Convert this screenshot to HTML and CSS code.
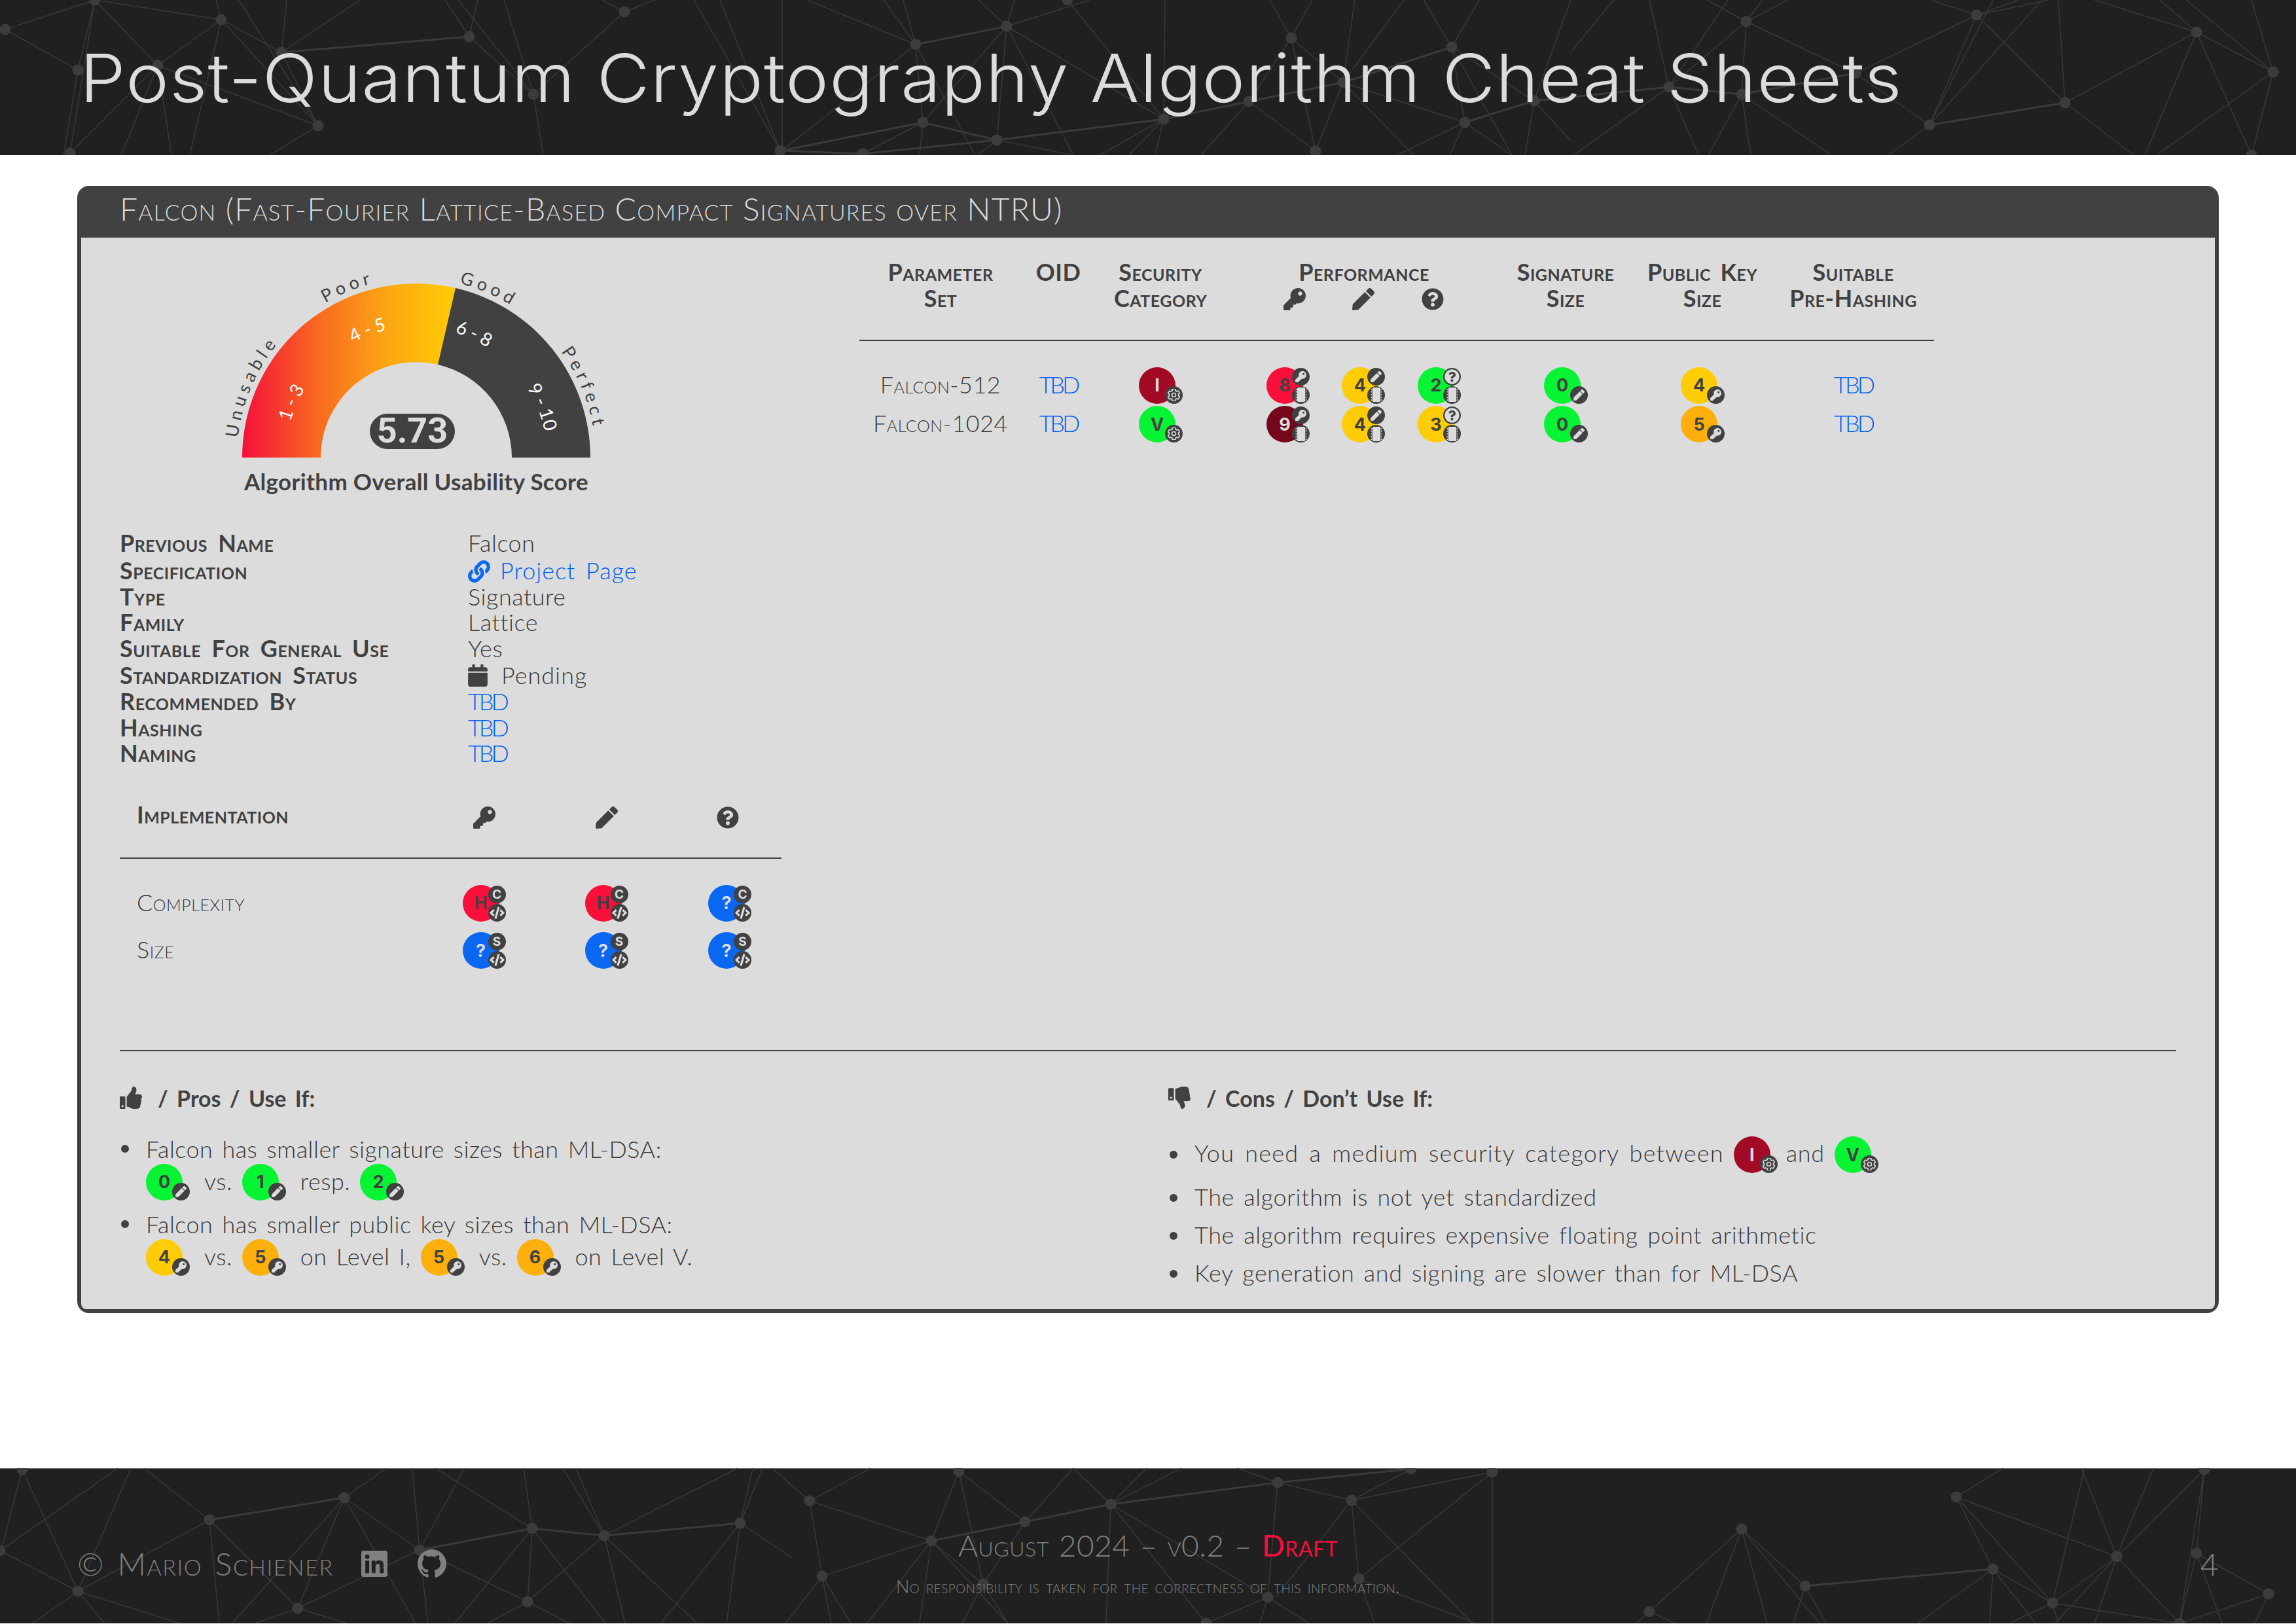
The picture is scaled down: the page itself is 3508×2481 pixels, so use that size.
FILE: index.html
```html
<!DOCTYPE html>
<html lang="en">
<head>
    <meta charset="UTF-8">
    <title>Post-Quantum Cryptography Algorithm Cheat Sheets</title>
    <link rel="stylesheet" href="styles.css">
</head>
<body>
    <svg class="defs" xmlns="http://www.w3.org/2000/svg">
        <symbol id="i-key" viewBox="0 0 512 512"><path d="M512 176.001C512 273.203 433.202 352 336 352c-11.22 0-22.19-1.062-32.827-3.069l-24.012 27.014A23.999 23.999 0 0 1 261.223 384H224v40c0 13.255-10.745 24-24 24h-40v40c0 13.255-10.745 24-24 24H24c-13.255 0-24-10.745-24-24v-78.059c0-6.365 2.529-12.47 7.029-16.971l161.802-161.802C163.108 213.814 160 195.271 160 176 160 78.798 238.797.001 335.999 0 433.488-.001 512 78.511 512 176.001zM336 128c0 26.51 21.49 48 48 48s48-21.49 48-48-21.49-48-48-48-48 21.49-48 48z"/></symbol>
        <symbol id="i-pen" viewBox="0 0 512 512"><path d="M290.74 93.24l128.02 128.02-277.99 277.99-114.14 12.6C11.35 513.54-1.56 500.62.14 485.34l12.7-114.22 277.9-277.88zm207.2-19.06l-60.11-60.11c-18.75-18.75-49.16-18.75-67.91 0l-56.55 56.55 128.02 128.02 56.55-56.55c18.75-18.76 18.75-49.16 0-67.91z"/></symbol>
        <symbol id="i-question" viewBox="0 0 512 512"><path d="M504 256c0 136.997-111.043 248-248 248S8 392.997 8 256C8 119.083 119.043 8 256 8s248 111.083 248 248zM262.655 90c-54.497 0-89.255 22.957-116.549 63.758-3.536 5.286-2.353 12.415 2.715 16.258l34.699 26.31c5.205 3.947 12.621 3.008 16.665-2.122 17.864-22.658 30.113-35.797 57.303-35.797 20.429 0 45.698 13.148 45.698 32.958 0 14.976-12.363 22.667-32.534 33.976C247.128 238.528 216 254.941 216 296v4c0 6.627 5.373 12 12 12h56c6.627 0 12-5.373 12-12v-1.333c0-28.462 83.186-29.647 83.186-106.667 0-58.002-60.165-102-116.531-102zM256 338c-25.365 0-46 20.635-46 46 0 25.364 20.635 46 46 46s46-20.636 46-46c0-25.365-20.635-46-46-46z"/></symbol>
        <symbol id="i-link" viewBox="0 0 512 512"><path d="M326.612 185.391c59.747 59.809 58.927 155.698.36 214.59-.11.12-.24.25-.36.37l-67.2 67.2c-59.27 59.27-155.699 59.262-214.96 0-59.27-59.26-59.27-155.7 0-214.96l37.106-37.106c9.84-9.84 26.786-3.3 27.294 10.606.648 17.722 3.826 35.527 9.69 52.721 1.986 5.822.567 12.262-3.783 16.612l-13.087 13.087c-28.026 28.026-28.905 73.66-1.155 101.96 28.024 28.579 74.086 28.749 102.325.51l67.2-67.19c28.191-28.191 28.073-73.757 0-101.83-3.701-3.694-7.429-6.564-10.341-8.569a16.037 16.037 0 0 1-6.947-12.606c-.396-10.567 3.348-21.456 11.698-29.806l21.054-21.055c5.521-5.521 14.182-6.199 20.584-1.731a152.482 152.482 0 0 1 20.522 17.197zM467.547 44.449c-59.261-59.262-155.69-59.27-214.96 0l-67.2 67.2c-.12.12-.25.25-.36.37-58.566 58.892-59.387 154.781.36 214.59a152.454 152.454 0 0 0 20.521 17.196c6.402 4.468 15.064 3.789 20.584-1.731l21.054-21.055c8.35-8.35 12.094-19.239 11.698-29.806a16.037 16.037 0 0 0-6.947-12.606c-2.912-2.005-6.64-4.875-10.341-8.569-28.073-28.073-28.191-73.639 0-101.83l67.2-67.19c28.239-28.239 74.3-28.069 102.325.51 27.75 28.3 26.872 73.934-1.155 101.96l-13.087 13.087c-4.35 4.35-5.769 10.79-3.783 16.612 5.864 17.194 9.042 34.999 9.69 52.721.509 13.906 17.454 20.446 27.294 10.606l37.106-37.106c59.271-59.259 59.271-155.699.001-214.959z"/></symbol>
        <symbol id="i-calendar" viewBox="0 0 448 512"><path d="M12 192h424c6.6 0 12 5.4 12 12v260c0 26.5-21.5 48-48 48H48c-26.5 0-48-21.5-48-48V204c0-6.6 5.4-12 12-12zm436-44v-36c0-26.5-21.5-48-48-48h-48V12c0-6.6-5.4-12-12-12h-40c-6.6 0-12 5.4-12 12v52H160V12c0-6.6-5.4-12-12-12h-40c-6.6 0-12 5.4-12 12v52H48C21.5 64 0 85.5 0 112v36c0 6.6 5.4 12 12 12h424c6.6 0 12-5.4 12-12z"/></symbol>
        <symbol id="i-up" viewBox="0 0 512 512"><path d="M104 224H24c-13.255 0-24 10.745-24 24v240c0 13.255 10.745 24 24 24h80c13.255 0 24-10.745 24-24V248c0-13.255-10.745-24-24-24zM64 472c-13.255 0-24-10.745-24-24s10.745-24 24-24 24 10.745 24 24-10.745 24-24 24zM384 81.452c0 42.416-25.97 66.208-33.277 94.548h101.723c33.397 0 59.397 27.746 59.553 58.098.084 17.938-7.546 37.249-19.439 49.197l-.11.11c9.836 23.337 8.237 56.037-9.308 79.469 8.681 25.895-.069 57.704-16.382 74.757 4.298 17.598 2.244 32.575-6.148 44.632C440.202 511.587 389.616 512 346.839 512l-2.845-.001c-48.287-.017-87.806-17.598-119.56-31.725-15.957-7.099-36.821-15.887-52.651-16.178-6.54-.12-11.783-5.457-11.783-11.998v-213.77c0-3.2 1.282-6.271 3.558-8.521 39.614-39.144 56.648-80.587 89.117-113.111 14.804-14.832 20.188-37.236 25.393-58.902C282.515 39.293 291.817 0 312 0c24 0 72 8 72 81.452z"/></symbol>
        <symbol id="i-down" viewBox="0 0 512 512"><path d="M0 56v240c0 13.255 10.745 24 24 24h80c13.255 0 24-10.745 24-24V56c0-13.255-10.745-24-24-24H24C10.745 32 0 42.745 0 56zm40 200c0-13.255 10.745-24 24-24s24 10.745 24 24-10.745 24-24 24-24-10.745-24-24zm272 256c-20.183 0-29.485-39.293-33.931-57.795-5.206-21.666-10.589-44.07-25.393-58.902-32.469-32.524-49.503-73.967-89.117-113.111a11.98 11.98 0 0 1-3.558-8.521V59.901c0-6.541 5.243-11.878 11.783-11.998 15.831-.29 36.694-9.079 52.651-16.178C256.189 17.598 295.709.017 343.995 0h2.844c42.777 0 93.363.413 113.774 29.737 8.392 12.057 10.446 27.034 6.148 44.632 16.312 17.053 25.063 48.863 16.382 74.757 17.544 23.432 19.143 56.132 9.308 79.469l.11.11c11.893 11.949 19.523 31.259 19.439 49.197-.156 30.352-26.157 58.098-59.553 58.098H350.723C358.03 364.34 384 388.132 384 430.548 384 504 336 512 312 512z"/></symbol>
        <symbol id="i-linkedin" viewBox="0 32 448 448"><path d="M416 32H31.9C14.3 32 0 46.5 0 64.3v383.4C0 465.5 14.3 480 31.9 480H416c17.6 0 32-14.5 32-32.3V64.3c0-17.8-14.4-32.3-32-32.3zM135.4 416H69V202.2h66.5V416zm-33.2-243c-21.3 0-38.5-17.3-38.5-38.5S80.9 96 102.2 96c21.2 0 38.5 17.3 38.5 38.5 0 21.3-17.2 38.5-38.5 38.5zm282.1 243h-66.4V312c0-24.8-.5-56.7-34.5-56.7-34.6 0-39.9 27-39.9 54.9V416h-66.4V202.2h63.7v29.2h.9c8.9-16.8 30.6-34.5 62.9-34.5 67.2 0 79.7 44.3 79.7 101.9V416z"/></symbol>
        <symbol id="i-github" viewBox="0 0 16 16"><path d="M8 0C3.58 0 0 3.58 0 8c0 3.54 2.29 6.53 5.47 7.59.4.07.55-.17.55-.38 0-.19-.01-.82-.01-1.49-2.01.37-2.53-.49-3.03-.94-.18-.46-.48-.94-.82-1.13-.28-.15-.68-.52-.01-.53.63-.01 1.08.58 1.23.82.72 1.21 1.87.87 2.33.66.07-.52.28-.87.51-1.07-1.78-.2-3.64-.89-3.64-3.95 0-.87.31-1.59.82-2.15-.08-.2-.36-1.02.08-2.12 0 0 .67-.21 2.2.82.64-.18 1.32-.27 2-.27.68 0 1.36.09 2 .27 1.53-1.04 2.2-.82 2.2-.82.44 1.1.16 1.92.08 2.12.51.56.82 1.27.82 2.15 0 3.07-1.87 3.75-3.65 3.95.29.25.54.73.54 1.48 0 1.07-.01 1.93-.01 2.2 0 .21.15.46.55.38A8.013 8.013 0 0016 8c0-4.42-3.58-8-8-8z"/></symbol>
        <symbol id="i-code" viewBox="0 0 640 512"><path d="M278.9 511.5l-61-17.7c-6.4-1.8-10-8.5-8.2-14.9L346.2 8.7c1.8-6.4 8.5-10 14.9-8.2l61 17.7c6.4 1.8 10 8.5 8.2 14.9L293.8 503.3c-1.9 6.4-8.5 10.1-14.9 8.2zm-114-112.2l43.5-46.4c4.6-4.9 4.3-12.7-.8-17.2L117 256l90.6-79.7c5.1-4.5 5.5-12.3.8-17.2l-43.5-46.4c-4.5-4.8-12.1-5.1-17-.5L3.8 247.2c-5.1 4.7-5.1 12.8 0 17.5l144.1 135.1c4.9 4.6 12.5 4.4 17-.5zm327.2.6l144.1-135.1c5.1-4.7 5.1-12.8 0-17.5L492.1 112.1c-4.8-4.5-12.4-4.3-17 .5L431.6 159c-4.6 4.9-4.3 12.7.8 17.2L523 256l-90.6 79.7c-5.1 4.5-5.5 12.3-.8 17.2l43.5 46.4c4.5 4.9 12.1 5.1 17 .6z"/></symbol>
        <symbol id="i-cog" viewBox="0 0 512 512"><path fill="none" stroke="currentColor" stroke-width="44" d="M487.4 315.7l-42.6-24.6c4.3-23.2 4.3-47 0-70.2l42.6-24.6c4.9-2.8 7.1-8.6 5.5-14-11.1-35.6-30-67.8-54.7-94.6-3.8-4.1-10-5.1-14.8-2.3L380.8 110c-17.9-15.4-38.5-27.3-60.8-35.1V25.8c0-5.6-3.9-10.5-9.4-11.7-36.7-8.2-74.3-7.8-109.2 0-5.5 1.2-9.4 6.1-9.4 11.7V75c-22.2 7.9-42.8 19.8-60.8 35.1L88.7 85.5c-4.9-2.8-11-1.9-14.8 2.3-24.7 26.7-43.6 58.9-54.7 94.6-1.7 5.4.6 11.2 5.5 14L67.3 221c-4.3 23.2-4.3 47 0 70.2l-42.6 24.6c-4.9 2.8-7.1 8.6-5.5 14 11.1 35.6 30 67.8 54.7 94.6 3.8 4.1 10 5.1 14.8 2.3l42.6-24.6c17.9 15.4 38.5 27.3 60.8 35.1v49.2c0 5.6 3.9 10.5 9.4 11.7 36.7 8.2 74.3 7.8 109.2 0 5.5-1.2 9.4-6.1 9.4-11.7v-49.2c22.2-7.9 42.8-19.8 60.8-35.1l42.6 24.6c4.9 2.8 11 1.9 14.8-2.3 24.7-26.7 43.6-58.9 54.7-94.6 1.5-5.5-.7-11.3-5.6-14.1zM256 336c-44.1 0-80-35.9-80-80s35.9-80 80-80 80 35.9 80 80-35.9 80-80 80z"/></symbol>
        <symbol id="i-chip" viewBox="0 0 512 512"><rect x="112" y="0" width="288" height="512" rx="48"/><path d="M60 48h36v40H60zM60 136h36v40H60zM60 236h36v40H60zM60 336h36v40H60zM60 424h36v40H60zM416 48h36v40h-36zM416 136h36v40h-36zM416 236h36v40h-36zM416 336h36v40h-36zM416 424h36v40h-36z"/></symbol>
    </svg>

    <header class="banner">
        <svg class="net" viewBox="0 0 3508 237" aria-hidden="true">
            <path class="net-thin" d="M8 45L145 0M8 45L119 107M145 0L119 107M145 0L241 100M145 0L107 234M145 0L338 30M338 30L241 100M338 30L486 192M338 30L290 237M338 30L330 0M241 100L107 234M241 100L486 192M241 100L185 237M241 100L262 237M430 80L550 0M430 80L438 0M430 80L486 192M430 80L338 30M119 107L97 237M486 192L412 237M486 192L365 0M717 56L815 144M717 56L730 0M717 56L680 0M954 18L815 144M954 18L920 0M954 18L1000 0M815 144L770 0M815 144L700 0M815 144L830 237M1192 230L1100 0M1192 230L1060 0M1195 230L1195 0M1233 0L1399 68M1399 68L1350 0M1399 68L1380 0M1399 68L1410 187M1399 68L1490 237M1399 68L1195 230M1538 40L1410 187M1538 40L1523 214M1538 40L1778 182M1538 40L1495 0M1538 40L1550 0M1538 40L1665 0M1538 40L1640 237M1631 0L1778 182M1778 182L1680 237M1778 182L1725 237M1778 182L1765 237M1410 187L1318 235M1410 187L1405 237M1523 214L1495 237M1523 214L1640 237M1780 0L1778 182M1908 155L2010 231M1908 155L1835 237M1908 155L1973 58M1973 58L2052 126M1973 58L1940 0M1973 58L2005 0M1973 58L2010 231M2052 126L2238 187M2052 126L2160 237M2052 126L2010 231M2052 126L2070 0M2052 126L2145 0M2218 72L2344 154M2218 72L2238 187M2218 72L2175 0M2218 72L2260 0M2218 72L2310 237M2238 187L2134 237M2238 187L2215 237M2238 187L2310 237M2344 154L2330 237M2344 154L2400 0M2344 154L2400 215M2400 80L2465 0M2668 33L2608 0M2668 33L2732 0M2668 33L2693 0M2668 33L2835 112M2668 33L2661 144M2668 33L2550 133M2835 112L3020 23M2835 112L2948 191M2550 133L2520 0M2550 133L2595 237M2550 133L2640 0M2550 133L2400 240M2661 144L2798 237M2661 144L2610 237M2661 144L2675 237M3020 23L2948 191M3020 23L3155 157M3020 23L2950 0M3020 23L3130 0M3020 23L3085 0M2948 191L2885 237M2948 191L3120 0M2948 191L3045 0M3155 157L3356 49M3155 157L3145 0M3155 157L3260 237M3356 49L3473 110M3356 49L3200 0M3356 49L3300 0M3356 49L3440 237M3356 49L3277 237M3473 110L3440 237M3473 110L3295 237M3473 110L3440 0M3473 110L3340 0"/>
            <path class="net-thick" d="M1399 68L1538 40M1778 182L1908 155M1778 182L1523 214M1410 187L1523 214M1195 230L1410 187M1195 230L1318 235M1318 235L1523 214M1908 155L2052 126M2052 126L2218 72M2238 187L2344 154M2344 154L2550 133M2550 133L2661 144M2661 144L2835 112M2948 191L3155 157M430 80L717 56"/>
            <path class="net-dot" d="M8 45h0M145 0h0M338 30h0M119 107h0M241 100h0M430 80h0M486 192h0M107 234h0M717 56h0M954 18h0M815 144h0M1192 230h0M1399 68h0M1538 40h0M1631 0h0M1973 58h0M2218 72h0M2052 126h0M1908 155h0M1778 182h0M2344 154h0M1410 187h0M1523 214h0M2238 187h0M1318 235h0M2010 231h0M2668 33h0M3020 23h0M3356 49h0M3473 110h0M2550 133h0M2661 144h0M2835 112h0M2948 191h0M3155 157h0M3440 237h0"/>
        </svg>
        <h1>Post-Quantum Cryptography Algorithm Cheat Sheets</h1>
    </header>

    <main class="content">
        <section class="card">
            <h2 class="card-title">Falcon (Fast-Fourier Lattice-Based Compact Signatures over NTRU)</h2>
            <div class="card-body">
                <div class="top">
                    <div class="left">
                        <svg class="gauge" viewBox="0 0 700 380">
                            <defs>
                                <linearGradient id="score-fill" gradientUnits="userSpaceOnUse" x1="84" y1="0" x2="410" y2="0">
                                    <stop offset="0" stop-color="#f50f3a"/>
                                    <stop offset=".36" stop-color="#f96a20"/>
                                    <stop offset=".67" stop-color="#fca514"/>
                                    <stop offset="1" stop-color="#ffcc05"/>
                                </linearGradient>
                                <path id="arc-outer" d="M76 319A274 274 0 0 1 624 319"/>
                                <path id="arc-inner" d="M150 319A200 200 0 0 1 550 319"/>
                            </defs>
                            <path d="M84 319A266 266 0 0 1 410 60L383 177A146 146 0 0 0 204 319Z" fill="url(#score-fill)"/>
                            <path d="M410 60A266 266 0 0 1 616 319L496 319A146 146 0 0 0 383 177Z" fill="#414141"/>
                            <g class="gauge-out">
                                <text text-anchor="middle"><textPath href="#arc-outer" startOffset="12.9%">Unusable</textPath></text>
                                <text text-anchor="middle"><textPath href="#arc-outer" startOffset="37.8%">Poor</textPath></text>
                                <text text-anchor="middle"><textPath href="#arc-outer" startOffset="63%">Good</textPath></text>
                                <text text-anchor="middle"><textPath href="#arc-outer" startOffset="87.5%">Perfect</textPath></text>
                            </g>
                            <g class="gauge-in">
                                <text text-anchor="middle"><textPath href="#arc-inner" startOffset="13.3%">1 - 3</textPath></text>
                                <text text-anchor="middle"><textPath href="#arc-inner" startOffset="38.4%">4 - 5</textPath></text>
                                <text text-anchor="middle"><textPath href="#arc-inner" startOffset="64%">6 - 8</textPath></text>
                                <text text-anchor="middle"><textPath href="#arc-inner" startOffset="88%">9 - 10</textPath></text>
                            </g>
                            <rect x="279" y="252" width="130" height="54" rx="27" fill="#414141"/>
                            <text class="gauge-score" x="344" y="296" text-anchor="middle">5.73</text>
                            <text class="gauge-label" x="350" y="369" text-anchor="middle">Algorithm Overall Usability Score</text>
                        </svg>

                        <dl class="info">
                            <dt>Previous Name</dt><dd>Falcon</dd>
                            <dt class="tall">Specification</dt><dd class="tall"><a class="page-link" href="#"><svg class="icon-link"><use href="#i-link"/></svg>Project Page</a></dd>
                            <dt>Type</dt><dd>Signature</dd>
                            <dt>Family</dt><dd>Lattice</dd>
                            <dt>Suitable For General Use</dt><dd>Yes</dd>
                            <dt class="tall">Standardization Status</dt><dd class="tall status"><svg class="icon-cal"><use href="#i-calendar"/></svg>Pending</dd>
                            <dt>Recommended By</dt><dd><a class="tbd" href="#">TBD</a></dd>
                            <dt>Hashing</dt><dd><a class="tbd" href="#">TBD</a></dd>
                            <dt>Naming</dt><dd><a class="tbd" href="#">TBD</a></dd>
                        </dl>

                        <table class="impl">
                            <thead>
                                <tr>
                                    <th>Implementation</th>
                                    <th><svg class="icon-head"><use href="#i-key"/></svg></th>
                                    <th><svg class="icon-head"><use href="#i-pen"/></svg></th>
                                    <th><svg class="icon-head"><use href="#i-question"/></svg></th>
                                </tr>
                            </thead>
                            <tbody>
                                <tr>
                                    <td>Complexity</td>
                                    <td><span class="badge red">H<span class="sub top"><b>C</b></span><span class="sub bottom"><svg class="code"><use href="#i-code"/></svg></span></span></td>
                                    <td><span class="badge red">H<span class="sub top"><b>C</b></span><span class="sub bottom"><svg class="code"><use href="#i-code"/></svg></span></span></td>
                                    <td><span class="badge blue">?<span class="sub top"><b>C</b></span><span class="sub bottom"><svg class="code"><use href="#i-code"/></svg></span></span></td>
                                </tr>
                                <tr>
                                    <td>Size</td>
                                    <td><span class="badge blue">?<span class="sub top"><b>S</b></span><span class="sub bottom"><svg class="code"><use href="#i-code"/></svg></span></span></td>
                                    <td><span class="badge blue">?<span class="sub top"><b>S</b></span><span class="sub bottom"><svg class="code"><use href="#i-code"/></svg></span></span></td>
                                    <td><span class="badge blue">?<span class="sub top"><b>S</b></span><span class="sub bottom"><svg class="code"><use href="#i-code"/></svg></span></span></td>
                                </tr>
                            </tbody>
                        </table>
                    </div>

                    <table class="params">
                        <colgroup>
                            <col class="w-param"><col class="w-oid"><col class="w-sec"><col class="w-key"><col class="w-pen"><col class="w-q"><col class="w-sig"><col class="w-pub"><col class="w-pre">
                        </colgroup>
                        <thead>
                            <tr>
                                <th rowspan="2">Parameter<br>Set</th>
                                <th rowspan="2">OID</th>
                                <th rowspan="2" class="col-sec">Security<br>Category</th>
                                <th colspan="3">Performance</th>
                                <th rowspan="2" class="col-sig">Signature<br>Size</th>
                                <th rowspan="2">Public Key<br>Size</th>
                                <th rowspan="2">Suitable<br>Pre-Hashing</th>
                            </tr>
                            <tr>
                                <th class="perf-key"><svg class="icon-head"><use href="#i-key"/></svg></th>
                                <th><svg class="icon-head"><use href="#i-pen"/></svg></th>
                                <th class="perf-q"><svg class="icon-head"><use href="#i-question"/></svg></th>
                            </tr>
                        </thead>
                        <tbody>
                            <tr>
                                <td class="txt">Falcon-512</td>
                                <td class="txt"><a class="tbd" href="#">TBD</a></td>
                                <td class="col-sec"><span class="badge maroon">I<span class="sub one"><svg class="cog"><use href="#i-cog"/></svg></span></span></td>
                                <td><span class="badge red">8<span class="sub top"><svg><use href="#i-key"/></svg></span><span class="sub bottom"><svg class="chip"><use href="#i-chip"/></svg></span></span></td>
                                <td><span class="badge yellow">4<span class="sub top"><svg><use href="#i-pen"/></svg></span><span class="sub bottom"><svg class="chip"><use href="#i-chip"/></svg></span></span></td>
                                <td><span class="badge green">2<span class="sub top"><svg class="qm"><use href="#i-question"/></svg></span><span class="sub bottom"><svg class="chip"><use href="#i-chip"/></svg></span></span></td>
                                <td class="col-sig"><span class="badge green">0<span class="sub one"><svg><use href="#i-pen"/></svg></span></span></td>
                                <td><span class="badge yellow">4<span class="sub one"><svg><use href="#i-key"/></svg></span></span></td>
                                <td class="txt"><a class="tbd" href="#">TBD</a></td>
                            </tr>
                            <tr>
                                <td class="txt">Falcon-1024</td>
                                <td class="txt"><a class="tbd" href="#">TBD</a></td>
                                <td class="col-sec"><span class="badge green">V<span class="sub one"><svg class="cog"><use href="#i-cog"/></svg></span></span></td>
                                <td><span class="badge wine">9<span class="sub top"><svg><use href="#i-key"/></svg></span><span class="sub bottom"><svg class="chip"><use href="#i-chip"/></svg></span></span></td>
                                <td><span class="badge yellow">4<span class="sub top"><svg><use href="#i-pen"/></svg></span><span class="sub bottom"><svg class="chip"><use href="#i-chip"/></svg></span></span></td>
                                <td><span class="badge yellow">3<span class="sub top"><svg class="qm"><use href="#i-question"/></svg></span><span class="sub bottom"><svg class="chip"><use href="#i-chip"/></svg></span></span></td>
                                <td class="col-sig"><span class="badge green">0<span class="sub one"><svg><use href="#i-pen"/></svg></span></span></td>
                                <td><span class="badge orange">5<span class="sub one"><svg><use href="#i-key"/></svg></span></span></td>
                                <td class="txt"><a class="tbd" href="#">TBD</a></td>
                            </tr>
                        </tbody>
                    </table>
                </div>

                <hr class="rule">

                <div class="proscons">
                    <div>
                        <h3><svg class="icon-thumb"><use href="#i-up"/></svg>/ Pros / Use If:</h3>
                        <ul class="pros">
                            <li>Falcon has smaller signature sizes than ML-DSA:
                                <div class="row">
                                    <span class="badge green">0<span class="sub one"><svg><use href="#i-pen"/></svg></span></span><span class="word">vs.</span>
                                    <span class="badge green">1<span class="sub one"><svg><use href="#i-pen"/></svg></span></span><span class="word">resp.</span>
                                    <span class="badge green">2<span class="sub one"><svg><use href="#i-pen"/></svg></span></span>
                                </div>
                            </li>
                            <li>Falcon has smaller public key sizes than ML-DSA:
                                <div class="row">
                                    <span class="badge yellow">4<span class="sub one"><svg><use href="#i-key"/></svg></span></span><span class="word">vs.</span>
                                    <span class="badge orange">5<span class="sub one"><svg><use href="#i-key"/></svg></span></span><span class="word">on Level I,</span>
                                    <span class="badge orange">5<span class="sub one"><svg><use href="#i-key"/></svg></span></span><span class="word">vs.</span>
                                    <span class="badge orange">6<span class="sub one"><svg><use href="#i-key"/></svg></span></span><span class="word">on Level V.</span>
                                </div>
                            </li>
                        </ul>
                    </div>
                    <div>
                        <h3><svg class="icon-thumb"><use href="#i-down"/></svg>/ Cons / Don’t Use If:</h3>
                        <ul class="cons">
                            <li class="row"><span class="word wide">You need a medium security category between</span>
                                <span class="badge maroon">I<span class="sub one"><svg class="cog"><use href="#i-cog"/></svg></span></span><span class="word">and</span>
                                <span class="badge green">V<span class="sub one"><svg class="cog"><use href="#i-cog"/></svg></span></span>
                            </li>
                            <li>The algorithm is not yet standardized</li>
                            <li>The algorithm requires expensive floating point arithmetic</li>
                            <li>Key generation and signing are slower than for ML-DSA</li>
                        </ul>
                    </div>
                </div>
            </div>
        </section>
    </main>

    <footer class="foot">
        <svg class="net" viewBox="0 2243 3508 237" aria-hidden="true">
            <path class="net-thin" d="M34 2245L0 2375M34 2245L119 2431M320 2322L220 2243M320 2322L119 2431M320 2322L335 2480M320 2322L455 2457M526 2288L590 2243M526 2288L641 2368M526 2288L355 2480M526 2288L455 2457M526 2288L635 2480M641 2368L455 2457M641 2368L630 2243M641 2368L710 2243M641 2368L654 2480M641 2368L806 2447M813 2335L665 2243M813 2335L800 2243M813 2335L806 2447M813 2335L695 2480M813 2335L925 2480M923 2346L860 2243M923 2346L880 2243M923 2346L1127 2243M923 2346L806 2447M923 2346L955 2480M923 2346L1065 2480M1131 2327L1150 2243M1131 2327L1010 2480M1131 2327L1110 2480M1131 2327L1165 2243M1131 2327L1210 2380M0 2369L119 2431M0 2369L180 2243M119 2431L200 2243M119 2431L50 2480M119 2431L160 2480M119 2431L275 2480M455 2457L390 2480M455 2457L530 2480M806 2447L745 2480M806 2447L870 2480M1465 2248L1423 2354M1465 2248L1566 2325M1465 2248L1502 2420M1237 2293L1423 2354M1237 2293L1330 2243M1237 2293L1256 2408M1237 2293L1180 2243M1423 2354L1256 2408M1566 2325L1640 2243M1566 2325L1502 2420M1423 2354L1502 2420M1423 2354L1325 2480M1423 2354L1405 2480M1423 2354L1540 2480M1256 2408L1200 2480M1256 2408L1270 2480M1256 2408L1300 2480M1502 2420L1470 2480M1502 2420L1540 2480M1697 2298L1640 2243M1697 2298L1752 2243M1697 2298L1805 2243M1697 2298L1690 2480M1697 2298L1937 2440M1697 2298L1843 2480M1952 2265L1937 2440M1952 2265L1890 2243M1952 2265L2065 2292M2065 2292L2280 2249M2065 2292L2156 2244M2065 2292L2076 2412M2065 2292L1950 2440M2076 2412L2280 2249M2076 2412L2100 2480M2280 2249L2280 2480M2076 2412L2255 2480M1937 2440L1843 2480M1937 2440L1925 2480M1937 2440L2000 2480M2065 2292L2250 2480M2989 2287L3234 2378M2989 2287L3045 2397M2989 2287L3136 2449M2989 2287L3060 2243M2661 2336L2520 2462M2661 2336L2758 2423M2661 2336L2607 2480M2661 2336L2700 2480M2661 2336L2780 2480M2758 2423L2740 2480M2758 2423L2790 2480M2520 2462L2560 2480M2520 2462L2500 2480M3045 2397L2930 2480M3045 2397L3040 2480M3045 2397L3136 2449M3045 2397L3110 2480M3136 2449L3234 2378M3136 2449L3330 2480M3136 2449L3070 2480M3136 2449L3145 2480M3234 2378L3180 2243M3234 2378L3140 2480M3234 2378L3290 2243M3234 2378L3368 2245M3234 2378L3330 2480M3234 2378L3200 2480M3136 2449L3185 2243M3356 2373L3368 2245M3356 2373L3330 2480M3356 2373L3466 2435M3356 2373L3395 2480M3368 2245L3330 2480M3466 2435L3330 2480M3466 2435L3445 2480"/>
            <path class="net-thick" d="M320 2322L526 2288M641 2368L813 2335M813 2335L923 2346M923 2346L1131 2327M1423 2354L1566 2325M1566 2325L1697 2298M1697 2298L1952 2265M1952 2265L2156 2244M2758 2423L3045 2397"/>
            <path class="net-dot" d="M34 2245h0M526 2288h0M320 2322h0M813 2335h0M923 2346h0M1131 2327h0M641 2368h0M0 2369h0M119 2431h0M806 2447h0M455 2457h0M1465 2248h0M1237 2293h0M1697 2298h0M1952 2265h0M2065 2292h0M2280 2249h0M2156 2244h0M1566 2325h0M1423 2354h0M1256 2408h0M1502 2420h0M2076 2412h0M1937 2440h0M1843 2480h0M2989 2287h0M2661 2336h0M2758 2423h0M3045 2397h0M3234 2378h0M3356 2373h0M3466 2435h0M3136 2449h0M2520 2462h0M3330 2480h0M3368 2245h0"/>
        </svg>
        <div class="foot-left">
            <span class="author">© Mario Schiener</span>
            <svg class="icon-in"><use href="#i-linkedin"/></svg>
            <svg class="icon-gh"><use href="#i-github"/></svg>
        </div>
        <div class="foot-mid">
            <div class="foot-date">August 2024 – v0.2 – <span class="draft">Draft</span></div>
            <div class="foot-note">No responsibility is taken for the correctness of this information.</div>
        </div>
        <div class="foot-page">4</div>
    </footer>
</body>
</html>
```

FILE: styles.css
```css
* {
    box-sizing: border-box;
}

html, body {
    margin: 0;
    height: 2481px;
    overflow: hidden;
}

body {
    display: flex;
    flex-direction: column;
    background-color: #fff;
    color: #383838;
    font-family: 'Lato', 'Noto Sans', sans-serif;
    font-weight: 300;
    font-size: 36px;
    letter-spacing: 0.5px;
    word-spacing: 5px;
}

a {
    color: #0060f0;
    text-decoration: none;
}

.tbd {
    letter-spacing: -4px;
}

.defs {
    display: none;
}

/* banner + footer share the dark network backdrop */
.banner, .foot {
    position: relative;
    height: 237px;
    flex: none;
    background-color: #202020;
}

.net {
    position: absolute;
    top: 0;
    left: 0;
    width: 3508px;
    height: 237px;
}

.net-thin {
    fill: none;
    stroke: #383838;
    stroke-width: 1.5;
}

.net-thick {
    fill: none;
    stroke: #3a3a3a;
    stroke-width: 3;
}

.net-dot {
    fill: none;
    stroke: #3c3c3c;
    stroke-width: 17;
    stroke-linecap: round;
}

/* no wide geometric font here, so Inter gets stretched a bit */
.banner h1 {
    position: relative;
    width: max-content;
    margin: 59px 0 0 122px;
    color: #dcdcdc;
    font-family: 'Inter', 'Lato', sans-serif;
    font-weight: 300;
    font-size: 102px;
    line-height: 120px;
    letter-spacing: 1px;
    word-spacing: 0;
    white-space: nowrap;
    transform: scaleX(1.088);
    transform-origin: 0 0;
}

.content {
    flex: 1;
    padding: 47px 118px 0;
}

.card {
    background-color: #414141;
    border: 6px solid #414141;
    border-radius: 18px;
}

.card-title {
    margin: 0;
    height: 73px;
    padding-left: 59px;
    color: #dcdcdc;
    font-size: 48px;
    font-weight: 300;
    font-variant: small-caps;
    line-height: 58px;
    letter-spacing: 1.2px;
    word-spacing: 0;
    white-space: nowrap;
}

.card-body {
    height: 1637px;
    padding: 0 59px;
    background-color: #dcdcdc;
    border-radius: 0 0 8px 8px;
}

.top {
    display: flex;
    height: 1241px;
}

.left {
    width: 1011px;
    margin-right: 119px;
    flex: none;
}

.gauge {
    display: block;
    width: 700px;
    height: 380px;
    margin: 17px 0 0 103px;
}

.gauge-out {
    font-size: 27px;
    letter-spacing: 6.5px;
    word-spacing: 0;
    font-weight: 400;
    fill: #414141;
}

.gauge-in {
    font-size: 28px;
    letter-spacing: 1px;
    word-spacing: -3px;
    font-weight: 400;
    fill: #fff;
}

.gauge-score {
    font-family: 'Roboto', sans-serif;
    font-size: 54px;
    font-weight: 700;
    fill: #dcdcdc;
    letter-spacing: 0;
    word-spacing: 0;
}

.gauge-label {
    font-size: 35px;
    font-weight: 700;
    fill: #414141;
    letter-spacing: 0.3px;
    word-spacing: 0;
}

.info {
    display: grid;
    grid-template-columns: 532px 1fr;
    margin: 50px 0 0;
    line-height: 39.5px;
}

.info dt {
    color: #414141;
    font-weight: 700;
    font-variant: small-caps;
    word-spacing: 7px;
}

.info dd {
    margin: 0;
}

.info .tall {
    line-height: 42px;
}

.status {
    letter-spacing: 1px;
}

.page-link {
    letter-spacing: 1px;
}

.icon-link {
    width: 34px;
    height: 34px;
    margin-right: 15px;
    fill: #0a67f2;
    vertical-align: -5px;
}

.icon-cal {
    width: 30px;
    height: 34px;
    margin-right: 21px;
    fill: #414141;
    vertical-align: -4px;
}

.icon-head {
    display: inline-block;
    width: 34px;
    height: 34px;
    fill: #414141;
    vertical-align: middle;
}

.impl {
    width: 1011px;
    margin-top: 42px;
    border-collapse: collapse;
    table-layout: fixed;
}

.impl th:first-child, .impl td:first-child {
    width: 463px;
    padding-left: 26px;
    text-align: left;
    font-variant: small-caps;
}

.impl th, .impl td {
    width: 187px;
    padding: 0;
    text-align: center;
}

.impl th:last-child, .impl td:last-child {
    width: 174px;
    padding-left: 16px;
}

.impl th:last-child {
    padding-left: 10px;
}

.impl th {
    height: 98px;
    padding-bottom: 34px;
    border-bottom: 2px solid #414141;
    color: #414141;
    font-weight: 700;
}

.impl td {
    height: 73px;
}

.impl td:first-child {
    padding-bottom: 4px;
}

.impl tr:first-child td {
    height: 105px;
    padding-top: 32px;
}

.params {
    width: 1642px;
    margin-top: 32px;
    border-collapse: collapse;
    table-layout: fixed;
    align-self: flex-start;
}

.w-param { width: 248px; }
.w-oid { width: 112px; }
.w-sec { width: 237px; }
.w-key { width: 116px; }
.w-pen { width: 114px; }
.w-q { width: 118px; }
.w-sig { width: 236px; }
.w-pub { width: 214px; }
.w-pre { width: 247px; }

.params th {
    padding: 0;
    color: #414141;
    font-weight: 700;
    font-variant: small-caps;
    line-height: 40px;
    vertical-align: top;
    white-space: nowrap;
}

.params th.col-sec { padding-right: 37px; }
.params th.col-sig { padding-left: 32px; }

.params thead tr:first-child th[rowspan] {
    border-bottom: 2px solid #414141;
}

.params thead tr:last-child th {
    height: 85px;
    padding-bottom: 43px;
    border-bottom: 2px solid #414141;
}

.params .icon-head {
    margin-top: -6px;
}

.params .perf-key .icon-head { margin-left: 20px; }
.params .perf-q .icon-head { margin-right: 20px; }

.params td {
    height: 60px;
    padding: 0;
    text-align: center;
    font-variant: small-caps;
}

.params tbody tr:first-child td {
    height: 98px;
    padding-top: 38px;
}

.params td.txt { padding-bottom: 4px; }
.params td.col-sec { padding-right: 37px; }
.params td.col-sig { padding-left: 32px; }

/* round score badge with small icon circles on its right edge */
.badge {
    position: relative;
    display: inline-flex;
    align-items: center;
    justify-content: center;
    width: 56px;
    height: 56px;
    margin-right: 10px;
    border-radius: 50%;
    color: #414141;
    font-family: 'Inter', sans-serif;
    font-size: 27px;
    font-weight: 700;
    font-variant: normal;
    letter-spacing: 0;
    word-spacing: 0;
    vertical-align: middle;
}

.red { background-color: #f80f3a; }
.maroon { background-color: #a30a26; color: #dcdcdc; }
.wine { background-color: #75061b; color: #dcdcdc; }
.yellow { background-color: #ffcc05; }
.orange { background-color: #fdb00b; }
.green { background-color: #07f434; }
.blue { background-color: #0a67f2; color: #dcdcdc; }

.sub {
    position: absolute;
    right: -10px;
    display: flex;
    align-items: center;
    justify-content: center;
    width: 27px;
    height: 27px;
    border-radius: 50%;
    background-color: #414141;
    color: #dcdcdc;
    font-size: 19px;
    font-weight: 700;
}

.sub b {
    font-weight: 700;
}

.sub svg {
    width: 17px;
    height: 17px;
    fill: #dcdcdc;
}

.sub .chip {
    width: 22px;
    height: 22px;
}

.sub .qm {
    width: 23px;
    height: 23px;
}

.sub .code {
    width: 23px;
    height: 19px;
}

.sub .cog {
    width: 19px;
    height: 19px;
    fill: none;
    color: #dcdcdc;
}

.sub.top {
    top: 1px;
}

.sub.bottom {
    bottom: 0;
}

.sub.one {
    right: -11px;
    bottom: 0;
}

.rule {
    height: 2px;
    margin: 0;
    border: 0;
    background-color: #414141;
}

.proscons {
    display: grid;
    grid-template-columns: 1602px 1fr;
}

.proscons h3 {
    height: 44px;
    margin: 50px 0 0;
    color: #414141;
    font-size: 34px;
    font-weight: 700;
    line-height: 44px;
    letter-spacing: 0;
    word-spacing: 5px;
}

.icon-thumb {
    width: 34px;
    height: 34px;
    margin-right: 24px;
    fill: #414141;
    vertical-align: -3px;
}

.proscons ul {
    margin: 0;
    padding: 0;
    list-style: none;
}

.proscons li {
    position: relative;
    padding-left: 40px;
    word-spacing: 4px;
}

.proscons li::before {
    content: '';
    position: absolute;
    left: 2px;
    width: 12px;
    height: 12px;
    border-radius: 50%;
    background-color: #414141;
}

.pros {
    padding-top: 32px !important;
}

.pros li {
    line-height: 46px;
    margin-bottom: 13px;
    letter-spacing: 0.45px;
}

.pros li::before {
    top: 17px;
}

.cons {
    padding-top: 35px !important;
}

.cons li {
    min-height: 58px;
    line-height: 55px;
    letter-spacing: 0.6px;
}

.cons li::before {
    top: 23px;
}

.cons li:first-child {
    height: 58px;
    margin-bottom: 8px;
}

.row {
    display: flex;
    align-items: center;
    gap: 15px;
    height: 56px;
}

.row .badge {
    margin-right: 18px;
}

.word {
    margin-bottom: 5px;
}

.word.wide {
    letter-spacing: 1.25px;
    word-spacing: 5px;
}

.cons .row .badge {
    margin-right: 9px;
}

.foot {
    margin-bottom: 1px;
    border-top: 1px solid #666;
    color: #808080;
}

.foot .net {
    top: -1px;
}

.foot-left {
    position: absolute;
    top: 117px;
    left: 118px;
    display: flex;
    align-items: center;
}

.author {
    font-size: 48px;
    font-variant: small-caps;
    line-height: 56px;
    letter-spacing: 1.5px;
    white-space: nowrap;
}

.icon-in {
    width: 40px;
    height: 40px;
    margin-left: 42px;
    fill: #808080;
}

.icon-gh {
    width: 44px;
    height: 44px;
    margin-left: 46px;
    fill: #808080;
}

.foot-mid {
    position: absolute;
    top: 92px;
    left: 0;
    width: 100%;
    text-align: center;
}

.foot-date {
    font-size: 46px;
    font-variant: small-caps;
    line-height: 50px;
    word-spacing: 2px;
}

.draft {
    color: #f50f3a;
    font-weight: 400;
}

.foot-note {
    margin-top: 22px;
    font-size: 27px;
    font-variant: small-caps;
    line-height: 32px;
    letter-spacing: 0.4px;
    word-spacing: 2px;
}

.foot-page {
    position: absolute;
    top: 118px;
    right: 118px;
    font-size: 48px;
    line-height: 56px;
}
```
